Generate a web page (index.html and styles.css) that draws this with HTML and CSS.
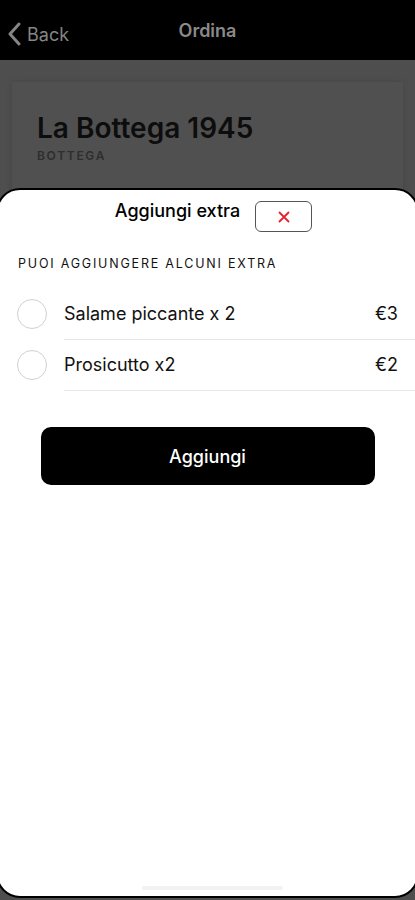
FILE: index.html
```html
<!DOCTYPE html>
<html lang="it">
<head>
    <meta charset="UTF-8">
    <meta name="viewport" content="width=device-width, initial-scale=1.0">
    <title>Ordina</title>
    <link rel="stylesheet" href="styles.css">
</head>
<body>
    <header class="nav-bar">
        <a class="back" href="#">
            <svg width="14" height="24" viewBox="0 0 14 24"><path d="M11 2 L2 12 L11 22" fill="none" stroke="currentColor" stroke-width="3" stroke-linecap="round" stroke-linejoin="round"/></svg>
            <span>Back</span>
        </a>
        <h1>Ordina</h1>
    </header>
    <div class="page">
        <div class="shop-card">
            <h2>La Bottega 1945</h2>
            <p class="shop-type">BOTTEGA</p>
        </div>
    </div>

    <div class="sheet">
        <div class="sheet-head">
            <h3>Aggiungi extra</h3>
            <button class="close-btn">
                <svg width="12" height="12" viewBox="0 0 12 12"><path d="M1.5 1.5 L10.5 10.5 M10.5 1.5 L1.5 10.5" stroke="#e8202a" stroke-width="1.8" stroke-linecap="round"/></svg>
            </button>
        </div>
        <p class="section-label">PUOI AGGIUNGERE ALCUNI EXTRA</p>
        <ul class="extras">
            <li>
                <span class="radio"></span>
                <div class="extra-row">
                    <span>Salame piccante x 2</span>
                    <span>€3</span>
                </div>
            </li>
            <li>
                <span class="radio"></span>
                <div class="extra-row">
                    <span>Prosicutto x2</span>
                    <span>€2</span>
                </div>
            </li>
        </ul>
        <button class="add-btn">Aggiungi</button>
        <div class="home-bar"></div>
    </div>
</body>
</html>
```

FILE: styles.css
```css
body {
    font-family: Inter, "Noto Sans", sans-serif;
    margin: 0;
    padding: 0;
    background-color: #4e4e4e;
    height: 900px;
    overflow: hidden;
}
.nav-bar {
    background: #000;
    height: 60px;
    display: flex;
    align-items: center;
    justify-content: center;
    position: relative;
}
.nav-bar h1 {
    margin: 0;
    color: #8a8a8a;
    font-size: 18px;
    font-weight: 600;
}
.back {
    position: absolute;
    left: 8px;
    top: 22px;
    display: flex;
    align-items: center;
    gap: 5px;
    color: #858585;
    text-decoration: none;
    font-size: 18px;
}
.page {
    padding: 22px 12px;
}
.shop-card {
    background: #505050;
    box-shadow: 0 0 6px rgba(0, 0, 0, 0.12);
    padding: 29px 25px 40px;
}
.shop-card h2 {
    margin: 0;
    color: #0d0d0d;
    font-size: 28px;
    font-weight: 600;
}
.shop-type {
    margin: 3px 0 0;
    color: #2e2e2e;
    font-size: 12px;
    font-weight: 600;
    letter-spacing: 1.7px;
}
.sheet {
    position: absolute;
    top: 188px;
    left: -4px;
    right: -4px;
    bottom: 2px;
    background: #fff;
    border: 2px solid #000;
    border-radius: 24px;
    box-sizing: border-box;
}
.sheet-head {
    display: flex;
    justify-content: center;
    align-items: flex-start;
    gap: 15px;
    padding: 10px 0 0 12px;
}
.sheet-head h3 {
    margin: 0;
    font-size: 18px;
    font-weight: 500;
    color: #000;
}
.close-btn {
    width: 57px;
    height: 31px;
    margin-top: 1px;
    background: #fff;
    border: 1px solid #555;
    border-radius: 6px;
    display: flex;
    align-items: center;
    justify-content: center;
}
.section-label {
    margin: 24px 0 0 20px;
    font-size: 12.5px;
    letter-spacing: 1.8px;
    color: #111;
}
.extras {
    list-style: none;
    margin: 17px 0 0;
    padding: 0;
}
.extras li {
    display: flex;
    align-items: center;
    height: 51px;
}
.radio {
    width: 28px;
    height: 28px;
    border: 1px solid #d0d0d0;
    border-radius: 50%;
    margin: 0 17px 0 19px;
    flex-shrink: 0;
}
.extra-row {
    flex: 1;
    height: 100%;
    display: flex;
    align-items: center;
    justify-content: space-between;
    padding-right: 19px;
    border-bottom: 1px solid #e6e6e6;
    font-size: 18px;
    color: #111;
}
.add-btn {
    display: block;
    margin: 37px auto 0;
    width: 334px;
    height: 58px;
    background: #000;
    color: #fff;
    border: none;
    border-radius: 10px;
    font-family: Inter, "Noto Sans", sans-serif;
    font-size: 18px;
    font-weight: 500;
}
.home-bar {
    position: absolute;
    left: 144px;
    right: 134px;
    bottom: 6px;
    height: 4px;
    border-radius: 2px;
    background: #f2f2f2;
}
```
